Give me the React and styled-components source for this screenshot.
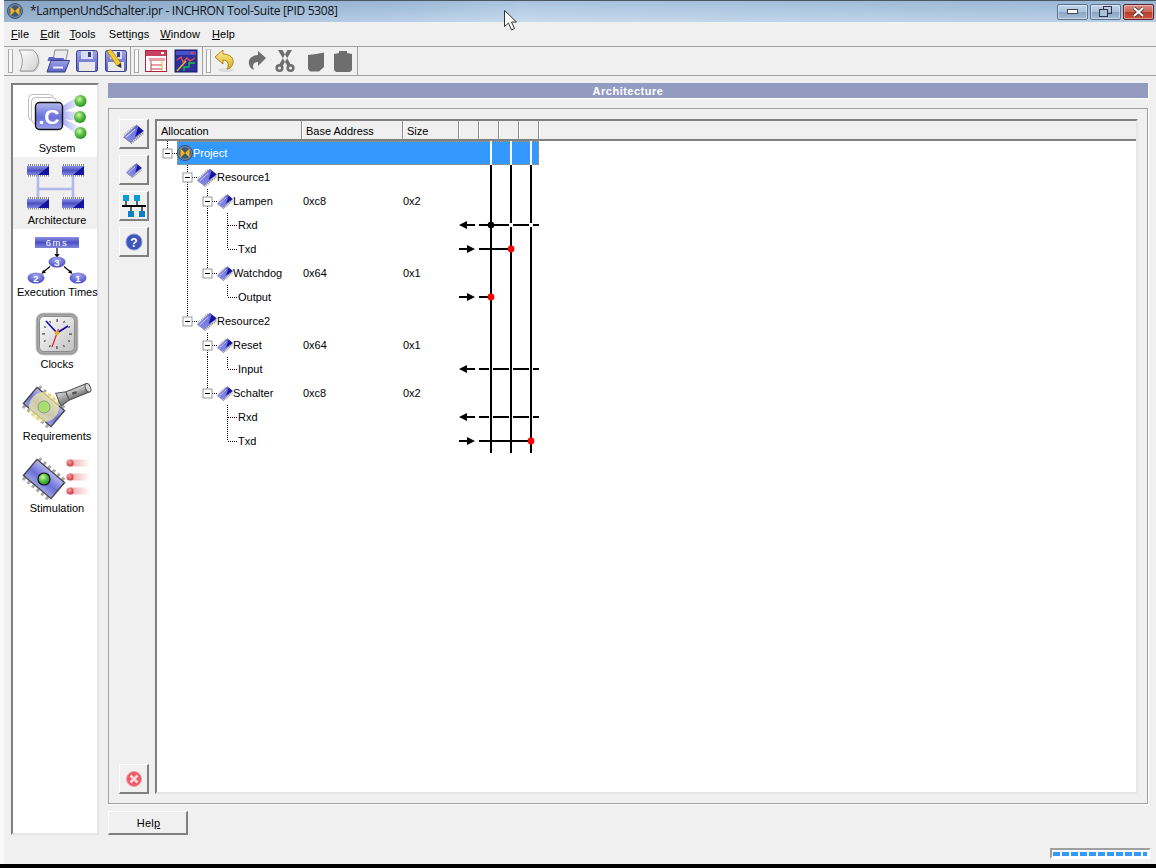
import React from "react";
import styled, { createGlobalStyle } from "styled-components";

const Global = createGlobalStyle`
  html, body { margin: 0; padding: 0; background: #f9f9f9; }
  #root { width: 1156px; height: 868px; overflow: hidden; }
  * { box-sizing: border-box; }
`;

const Page = styled.div`
  position: relative;
  width: 1156px;
  height: 868px;
  display: flex;
  flex-direction: column;
  background: #f9f9f9;
  font: 11px "Liberation Sans", Arial, sans-serif;
  color: #000;
`;
const Window = styled.div`
  flex: 1;
  margin-left: 4px;
  display: flex;
  flex-direction: column;
  background: #f0f0f0;
  min-height: 0;
`;
const BlackEdge = styled.div`
  height: 4px;
  background: #000;
`;
const TitleBar = styled.div`
  height: 22px;
  display: flex;
  align-items: center;
  padding: 0 2px 0 2px;
  border-top: 1px solid #4b5663;
  background:
    linear-gradient(90deg, rgba(70, 100, 140, 0.28) 0, rgba(70, 100, 140, 0.05) 35%, rgba(255, 255, 255, 0.12) 45%, rgba(70, 100, 140, 0.08) 100%),
    linear-gradient(180deg, #9fbcd9 0, #c0d6ec 100%);
`;
const TitleIcon = styled.svg`
  width: 16px;
  height: 16px;
  margin-right: 8px;
  flex: none;
  position: relative;
  top: -1px;
  left: 1px;
`;
const TitleText = styled.div`
  flex: 1;
  font: 12px "Open Sans", "Liberation Sans", sans-serif;
  letter-spacing: -0.3px;
  color: #111;
  position: relative;
  top: -1px;
  white-space: nowrap;
`;
const CaptionButton = styled.div`
  width: 31px;
  height: 16px;
  margin-left: 2px;
  border: 1px solid ${(p) => (p.$close ? "#5b1f2f" : "#5d728c")};
  border-radius: 2px;
  display: flex;
  align-items: center;
  justify-content: center;
  box-shadow: inset 0 0 0 1px rgba(255, 255, 255, 0.4);
  background: ${(p) =>
    p.$close
      ? "linear-gradient(180deg,#dc8d80 0,#cd6555 48%,#b83c2a 52%,#c9573f 100%)"
      : "linear-gradient(180deg,#c2d6ea 0,#a7c0da 48%,#8aa6c4 52%,#a4bdd7 100%)"};
`;
const MenuBar = styled.div`
  height: 25px;
  display: flex;
  align-items: center;
  padding-left: 7px;
  border-bottom: 1px solid #a0a0a0;
`;
const MenuItem = styled.span`
  margin-right: ${(p) => p.$gap}px;
  letter-spacing: 0.1px;
  u { text-underline-offset: 1px; }
`;
const ToolBar = styled.div`
  height: 29px;
  display: flex;
  border-bottom: 1px solid #a0a0a0;
`;
const ToolGroup = styled.div`
  display: flex;
  align-items: center;
  padding-left: ${(p) => p.$pad}px;
  padding-right: ${(p) => p.$right || 0}px;
  border-right: 1px solid #a0a0a0;
`;
const Grip = styled.div`
  width: 5px;
  height: 24px;
  margin-right: ${(p) => p.$gap}px;
  border: 1px solid #a8a8a8;
  border-top-color: #ccc;
  background: #fafafa;
`;
const ToolCell = styled.div`
  width: ${(p) => p.$w}px;
  flex: none;
  height: 28px;
  display: flex;
  align-items: center;
  justify-content: center;
  svg { flex: none; }
`;
const Body = styled.div`
  height: 759px;
  padding: 7px 8px 0 7px;
  display: flex;
  gap: 9px;
`;
const Sidebar = styled.nav`
  width: 88px;
  height: 752px;
  flex: none;
  background: #fff;
  border-style: solid;
  border-width: 2px;
  border-color: #808080 #e6e6e6 #e6e6e6 #808080;
`;
const NavItem = styled.div`
  height: 72px;
  background: ${(p) => (p.$active ? "#f0f0f0" : "#fff")};
`;
const NavIcon = styled.svg`
  display: block;
  width: 84px;
  height: 56px;
`;
const NavLabel = styled.div`
  height: 14px;
  line-height: 14px;
  padding-left: 4px;
  text-align: center;
  white-space: nowrap;
`;
const Main = styled.main`
  flex: 1;
  display: flex;
  flex-direction: column;
  min-width: 0;
`;
const SectionHeader = styled.div`
  height: 15px;
  line-height: 16px;
  background: #939bc1;
  color: #fff;
  font-weight: bold;
  letter-spacing: 0.5px;
  text-align: center;
  box-shadow: 1px 1px 0 #fff;
`;
const GroupBox = styled.section`
  height: 696px;
  margin-top: 10px;
  padding: 10px 9px 9px 10px;
  display: flex;
  gap: 6px;
  border: 1px solid #a0a0a0;
  box-shadow: 1px 1px 0 #fff;
`;
const SideTools = styled.div`
  width: 30px;
  flex: none;
  display: flex;
  flex-direction: column;
  gap: 6px;
`;
const SideButton = styled.button`
  width: 30px;
  height: 30px;
  padding: 0;
  display: flex;
  align-items: center;
  justify-content: center;
  background: #f0f0f0;
  border-style: solid;
  border-width: 1px 2px 2px 1px;
  border-color: #fff #808080 #808080 #fff;
  margin-top: ${(p) => (p.$bottom ? "auto" : "0")};
`;
const TreeFrame = styled.div`
  flex: 1;
  min-width: 0;
  background: #fff;
  border-style: solid;
  border-width: 2px;
  border-color: #808080 #e6e6e6 #e6e6e6 #808080;
`;
const HeaderRow = styled.div`
  height: 20px;
  display: flex;
  background: #f0f0f0;
  border-bottom: 2px solid #808080;
`;
const HeaderCell = styled.div`
  width: ${(p) => p.$w}px;
  flex: ${(p) => (p.$fill ? 1 : "none")};
  line-height: 20px;
  padding-left: 4px;
  box-shadow: inset 1px 0 0 #fff;
  border-right: ${(p) => (p.$fill ? "0" : "1px solid #8c8c8c")};
`;
const Row = styled.div`
  position: relative;
  height: 24px;
  display: grid;
  grid-template-columns: 145px 100px 57px 80px;
  align-items: center;
`;
const Selection = styled.div`
  position: absolute;
  left: 20px;
  top: 0;
  width: 362px;
  height: 24px;
  background: #3399ff;
  outline: 1px dotted #d0904a;
  outline-offset: -1px;
`;
const TreeGuide = styled.svg`
  position: absolute;
  left: 0;
  top: 0;
  width: 145px;
  height: 24px;
`;
const TreeCell = styled.div`
  position: relative;
  height: 24px;
  display: flex;
  align-items: center;
  padding-left: ${(p) => p.$indent}px;
  color: ${(p) => (p.$selected ? "#fff" : "#000")};
  white-space: nowrap;
`;
const TreeIconSlot = styled.span`
  position: relative;
  display: block;
  flex: none;
  height: ${(p) => p.$size}px;
  width: ${(p) => p.$size}px;
`;
const TreeLabel = styled.span`
  position: relative;
`;
const ValueCell = styled.div`
  position: relative;
  padding-left: 1px;
`;
const Matrix = styled.svg`
  position: relative;
  display: block;
  width: 80px;
  height: 24px;
`;
const HelpButton = styled.button`
  width: 80px;
  height: 24px;
  margin-top: 7px;
  padding: 0 0 0 2px;
  background: #f0f0f0;
  border-style: solid;
  border-width: 1px 2px 2px 1px;
  border-color: #fff #808080 #808080 #fff;
  font: inherit;
  letter-spacing: 0.2px;
  color: #000;
`;
const Footer = styled.div`
  flex: 1;
  display: flex;
  justify-content: flex-end;
  align-items: flex-start;
  padding: 13px 5px 0 0;
`;
const Progress = styled.div`
  width: 101px;
  height: 11px;
  display: flex;
  gap: 2px;
  align-items: center;
  padding-left: 1px;
  background: #fbfbfb;
  border-style: solid;
  border-width: 2px;
  border-color: #a0a0a0 #fff #fff #a0a0a0;
`;
const Segment = styled.div`
  width: ${(p) => p.$w}px;
  height: 4px;
  background: #3399ff;
`;
const Cursor = styled.svg`
  position: absolute;
  left: 504px;
  top: 10px;
  width: 14px;
  height: 21px;
`;

const Defs = () => (
  <svg width="0" height="0" style={{ position: "absolute" }}>
    <defs>
      <linearGradient id="chip" x1="0" y1="1" x2="1" y2="0">
        <stop offset="0" stopColor="#8f94e6" />
        <stop offset="0.7" stopColor="#6a70d8" />
        <stop offset="1" stopColor="#4a50c4" />
      </linearGradient>
      <linearGradient id="front" x1="0" y1="0" x2="0" y2="1">
        <stop offset="0" stopColor="#b4b8ef" />
        <stop offset="0.55" stopColor="#6a70d8" />
        <stop offset="1" stopColor="#9ca1e6" />
      </linearGradient>
      <radialGradient id="ball" cx="0.4" cy="0.35" r="0.7">
        <stop offset="0" stopColor="#d2f6b0" />
        <stop offset="0.5" stopColor="#58c040" />
        <stop offset="1" stopColor="#1f8f2a" />
      </radialGradient>
      <radialGradient id="redBall" cx="0.4" cy="0.35" r="0.7">
        <stop offset="0" stopColor="#f6a0a0" />
        <stop offset="1" stopColor="#c8343c" />
      </radialGradient>
      <linearGradient id="trail" x1="0" y1="0" x2="1" y2="0">
        <stop offset="0" stopColor="#f0a8a8" />
        <stop offset="1" stopColor="#fff" />
      </linearGradient>
      <linearGradient id="beam" x1="0" y1="0" x2="1" y2="0">
        <stop offset="0" stopColor="#a9adf0" />
        <stop offset="1" stopColor="#eef0ff" />
      </linearGradient>
      <linearGradient id="bar" x1="0" y1="0" x2="0" y2="1">
        <stop offset="0" stopColor="#8d92e4" />
        <stop offset="0.5" stopColor="#4a50c4" />
        <stop offset="1" stopColor="#8388dc" />
      </linearGradient>
      <radialGradient id="oval" cx="0.5" cy="0.3" r="0.8">
        <stop offset="0" stopColor="#a4a8f0" />
        <stop offset="1" stopColor="#3b41bd" />
      </radialGradient>
      <linearGradient id="clockFace" x1="0" y1="0" x2="1" y2="1">
        <stop offset="0" stopColor="#ffffff" />
        <stop offset="1" stopColor="#c0c0c0" />
      </linearGradient>
      <linearGradient id="disk" x1="0" y1="0" x2="0" y2="1">
        <stop offset="0" stopColor="#9fa4e8" />
        <stop offset="1" stopColor="#5a60c0" />
      </linearGradient>
      <linearGradient id="sheet" x1="0" y1="0" x2="1" y2="1">
        <stop offset="0" stopColor="#fff" />
        <stop offset="1" stopColor="#d0d0d0" />
      </linearGradient>
      <linearGradient id="gold" x1="0" y1="0" x2="0" y2="1">
        <stop offset="0" stopColor="#fff09a" />
        <stop offset="1" stopColor="#d9a820" />
      </linearGradient>
      <linearGradient id="torch" x1="0" y1="0" x2="0" y2="1">
        <stop offset="0" stopColor="#d8d8d8" />
        <stop offset="1" stopColor="#707070" />
      </linearGradient>
    </defs>
  </svg>
);

const ProjectLogo = () => (
  <>
    <circle cx="8" cy="8" r="7.5" fill="#6d86a8" stroke="#3e4e68" />
    <circle cx="8" cy="8" r="5.8" fill="#41587a" />
    <path d="M3.5 3.5v9L8 8zM12.5 3.5v9L8 8z" fill="#f7b518" />
  </>
);

const ChipGlyph = ({ size }) => (
  <svg width={size} height={size} viewBox="0 0 20 20" style={{ display: "block" }}>
    <path d="M7.5 19.5L20 9" stroke="#909090" strokeWidth="2" strokeDasharray="1.2 0.8" />
    <path d="M1 11.5L11 2.5" stroke="#a8a8a8" strokeWidth="1.4" strokeDasharray="1 1" />
    <path d="M0.5 13.5L13 2 19.5 7.5 7 18.5z" fill="url(#chip)" stroke="#585d9c" strokeWidth="0.5" />
    <path d="M11.5 13L14.6 3.4 19.5 7.5z" fill="#1414a0" />
    <path d="M3 13.5L11.5 6" stroke="#d0d2f8" strokeWidth="1" />
  </svg>
);

const Dots = ({ d }) => <path d={d} stroke="#000" strokeWidth="1" strokeDasharray="1 1" fill="none" />;

const Guide = ({ depth, next, through }) => {
  const x = 10 + 20 * depth;
  return (
    <TreeGuide viewBox="0 0 145 24">
      {through.map((t) => (
        <Dots key={t} d={`M${t + 0.5} 0V24`} />
      ))}
      {depth === 3 ? (
        <>
          <Dots d={`M${x + 0.5} 0V${next ? 24 : 12}`} />
          <Dots d={`M${x + 1} 12.5H${x + 10}`} />
        </>
      ) : (
        <>
          <Dots d={`M${x + 0.5} 0V7`} />
          {next && <Dots d={`M${x + 0.5} 17V24`} />}
          <Dots d={`M${x + 5} 12.5H${x + 10}`} />
          <rect x={x - 4} y={8} width={9} height={9} fill="#fff" stroke="#999" />
          <path d={`M${x - 2} 12.5H${x + 3}`} stroke="#000" />
        </>
      )}
    </TreeGuide>
  );
};

const BusMatrix = ({ dir, hit, selected }) => {
  const verticals = [32, 52, 72];
  if (selected) {
    return (
      <Matrix viewBox="0 0 80 24">
        {verticals.map((x) => (
          <rect key={x} x={x - 1} y={0} width={2} height={24} fill="#fff" />
        ))}
      </Matrix>
    );
  }
  return (
    <Matrix viewBox="0 0 80 24">
      {verticals.map((x) => (
        <rect key={x} x={x - 1} y={0} width={2} height={24} fill="#000" />
      ))}
      {dir === "in" && <path d="M0 12l8-4v3h8v2H8v3z" fill="#000" />}
      {dir === "out" && <path d="M16 12l-8-4v3H0v2h8v3z" fill="#000" />}
      {dir === "in" && (
        <>
          <rect x={20} y={11} width={hit === 0 ? 12 : 10} height={2} />
          <rect x={34} y={11} width={16} height={2} />
          <rect x={54} y={11} width={16} height={2} />
          <rect x={74} y={11} width={6} height={2} />
          {hit === 0 && (
            <>
              <rect x={50} y={10} width={4} height={4} fill="#fff" />
              <rect x={70} y={10} width={4} height={4} fill="#fff" />
              <circle cx={32} cy={12} r={3.3} fill="#000" />
            </>
          )}
        </>
      )}
      {dir === "out" && (
        <>
          <rect x={20} y={11} width={verticals[hit] - 20} height={2} />
          <circle cx={verticals[hit]} cy={12} r={3.4} fill="#ff0000" />
        </>
      )}
    </Matrix>
  );
};

const ROWS = [
  { label: "Project", depth: 0, next: false, through: [], selected: true },
  { label: "Resource1", depth: 1, next: true, through: [] },
  { label: "Lampen", depth: 2, next: true, through: [30], base: "0xc8", size: "0x2" },
  { label: "Rxd", depth: 3, next: true, through: [30, 50], dir: "in", hit: 0 },
  { label: "Txd", depth: 3, next: false, through: [30, 50], dir: "out", hit: 1 },
  { label: "Watchdog", depth: 2, next: false, through: [30], base: "0x64", size: "0x1" },
  { label: "Output", depth: 3, next: false, through: [30], dir: "out", hit: 0 },
  { label: "Resource2", depth: 1, next: false, through: [] },
  { label: "Reset", depth: 2, next: true, through: [], base: "0x64", size: "0x1" },
  { label: "Input", depth: 3, next: false, through: [50], dir: "in" },
  { label: "Schalter", depth: 2, next: false, through: [], base: "0xc8", size: "0x2" },
  { label: "Rxd", depth: 3, next: true, through: [], dir: "in" },
  { label: "Txd", depth: 3, next: false, through: [], dir: "out", hit: 2 },
];
const INDENT = [20, 40, 60, 81];

const TreeRow = ({ row }) => (
  <Row>
    {row.selected && <Selection />}
    <TreeCell $indent={INDENT[row.depth]} $selected={row.selected}>
      <Guide depth={row.depth} next={row.next} through={row.through} />
      {row.depth === 0 && (
        <TreeIconSlot $size={16}>
          <svg width="16" height="16" viewBox="0 0 16 16" style={{ display: "block" }}>
            <ProjectLogo />
          </svg>
        </TreeIconSlot>
      )}
      {row.depth === 1 && <TreeIconSlot $size={20}><ChipGlyph size={20} /></TreeIconSlot>}
      {row.depth === 2 && <TreeIconSlot $size={16}><ChipGlyph size={16} /></TreeIconSlot>}
      <TreeLabel>{row.label}</TreeLabel>
    </TreeCell>
    <ValueCell>{row.base}</ValueCell>
    <ValueCell>{row.size}</ValueCell>
    <BusMatrix dir={row.dir} hit={row.hit} selected={row.selected} />
  </Row>
);

const SysIcon = () => (
  <NavIcon viewBox="0 0 84 56">
    <rect x="15.5" y="9.5" width="25" height="26" rx="4" fill="#fff" stroke="#bdbdbd" />
    <rect x="18.5" y="12.5" width="25" height="26" rx="4" fill="#fff" stroke="#bdbdbd" />
    <path d="M48 22L64 12 66 20 48 28z" fill="url(#beam)" />
    <path d="M48 26L66 27 66 36 48 34z" fill="url(#beam)" />
    <path d="M48 32L66 42 62 48 48 38z" fill="url(#beam)" />
    <rect x="22.5" y="17.5" width="27" height="27" rx="4" fill="url(#front)" stroke="#111" strokeWidth="1.4" />
    <text x="36" y="39" textAnchor="middle" fontFamily="Liberation Sans" fontWeight="bold" fontSize="21" fill="#fff">.C</text>
    <circle cx="67.5" cy="16" r="6" fill="url(#ball)" />
    <circle cx="67" cy="32" r="6" fill="url(#ball)" />
    <circle cx="67.5" cy="48" r="6" fill="url(#ball)" />
  </NavIcon>
);

const MiniChip = ({ x, y }) => (
  <g>
    <path d={`M${x + 1} ${y + 1}H${x + 22}M${x + 1} ${y + 11.5}H${x + 22}`} stroke="#8a8a8a" strokeWidth="2" strokeDasharray="1 1" />
    <rect x={x} y={y + 2} width="22" height="9" fill="url(#bar)" />
    <path d={`M${x + 11} ${y + 11}L${x + 22} ${y + 2}V${y + 11}z`} fill="#1414a0" />
  </g>
);

const ArchIcon = () => (
  <NavIcon viewBox="0 0 84 56">
    <path d="M25 16V44M60 16V44M25 32H60" stroke="#b4b7ea" strokeWidth="2.6" fill="none" />
    <MiniChip x={14} y={7} />
    <MiniChip x={49} y={7} />
    <MiniChip x={14} y={40} />
    <MiniChip x={49} y={40} />
  </NavIcon>
);

const ExecIcon = () => (
  <NavIcon viewBox="0 0 84 56">
    <rect x="22" y="8" width="44" height="11" fill="url(#bar)" />
    <text x="44" y="17" textAnchor="middle" fontFamily="Liberation Sans" fontSize="9.5" letterSpacing="1.5" fill="#fff">6ms</text>
    <path d="M44 19V27" stroke="#000" strokeWidth="1.2" />
    <path d="M41.5 25L44 29 46.5 25z" />
    <path d="M37 37.5L31 42.5M51 37.5L57 42.5" stroke="#000" strokeWidth="1.2" />
    <path d="M28.5 45L30 41 33 43.5zM59.5 45L58 41 55 43.5z" />
    <ellipse cx="44" cy="33" rx="8.5" ry="5.5" fill="url(#oval)" />
    <ellipse cx="23" cy="49" rx="8.5" ry="5.5" fill="url(#oval)" />
    <ellipse cx="65" cy="49" rx="8.5" ry="5.5" fill="url(#oval)" />
    <g fontFamily="Liberation Sans" fontSize="9.5" fontWeight="bold" fill="#fff" textAnchor="middle">
      <text x="44" y="36.5">3</text>
      <text x="23" y="52.5">2</text>
      <text x="65" y="52.5">1</text>
    </g>
  </NavIcon>
);

const ClockIcon = () => {
  const ticks = Array.from({ length: 12 }, (_, i) => i * 30);
  return (
    <NavIcon viewBox="0 0 84 56">
      <rect x="22.5" y="11.5" width="43" height="43" rx="8" fill="#d8d8d8" />
      <rect x="24" y="13" width="40" height="40" rx="6" fill="#a8a8a8" stroke="#888" />
      <rect x="26.5" y="15.5" width="35" height="35" rx="4" fill="url(#clockFace)" stroke="#8a8a8a" />
      {ticks.map((a) => (
        <rect key={a} x="43.5" y="18" width="1.2" height={a % 90 === 0 ? 3 : 2} fill="#444" transform={`rotate(${a} 44 33)`} />
      ))}
      <path d="M44 32L33 20M44 32L55 25" stroke="#0c0ca8" strokeWidth="1.6" fill="none" />
      <path d="M39 46L45.5 28" stroke="#e01818" strokeWidth="1.1" fill="none" />
      <circle cx="44" cy="32" r="2.2" fill="#e8b020" />
    </NavIcon>
  );
};

const TiltChip = ({ cx, cy }) => (
  <g transform={`translate(${cx} ${cy}) rotate(40)`}>
    <path d="M-17 -12.5H17M-17 12.5H17" stroke="#a8a8a8" strokeWidth="3.4" strokeDasharray="3 3" />
    <rect x="-18" y="-10.5" width="36" height="21" fill="url(#front)" stroke="#444" strokeWidth="1.4" />
  </g>
);

const ReqIcon = () => (
  <NavIcon viewBox="0 0 84 56">
    <TiltChip cx={31} cy={34} />
    <circle cx="31" cy="34" r="15" fill="#f6ee9c" opacity="0.7" />
    <circle cx="31" cy="34" r="6" fill="#a8df6e" stroke="#8aa070" />
    <g transform="translate(62 20) rotate(-22)">
      <path d="M-18 -7L-8 -4.5V4.5L-18 7z" fill="url(#torch)" stroke="#555" />
      <rect x="-8" y="-4.5" width="22" height="9" rx="1" fill="url(#torch)" stroke="#555" />
      <ellipse cx="14" cy="0" rx="2.5" ry="4.5" fill="#d8d8d8" stroke="#555" />
      <rect x="-3" y="-1.5" width="5" height="2.5" rx="1" fill="#555" />
    </g>
  </NavIcon>
);

const StimIcon = () => (
  <NavIcon viewBox="0 0 84 56">
    <TiltChip cx={31} cy={34} />
    <circle cx="31" cy="34" r="6" fill="url(#ball)" stroke="#111" strokeWidth="1.2" />
    {[18, 32, 46].map((y) => (
      <g key={y}>
        <rect x="57" y={y - 3.5} width="20" height="7" fill="url(#trail)" />
        <circle cx="57" cy={y} r="3.6" fill="url(#redBall)" />
      </g>
    ))}
  </NavIcon>
);

const NAV = [
  { label: "System", Icon: SysIcon },
  { label: "Architecture", Icon: ArchIcon, active: true },
  { label: "Execution Times", Icon: ExecIcon },
  { label: "Clocks", Icon: ClockIcon },
  { label: "Requirements", Icon: ReqIcon },
  { label: "Stimulation", Icon: StimIcon },
];

const Tb = ({ children }) => (
  <svg width="24" height="24" viewBox="0 0 24 24">{children}</svg>
);

const NewIcon = () => (
  <Tb>
    <path d="M3 2.5H17C20 4 22.5 8 22.5 12.5 22.5 17 20 21 17 23H4C3 23 3 23 3.5 22 7 17 7 8 3 2.5z" fill="#c8c8c8" />
    <path d="M2 1H16C19 3 21.5 7 21.5 11.5 21.5 16 19 20 16 22H3C6 16 6.5 7 2 1z" fill="url(#sheet)" stroke="#9a9a9a" />
  </Tb>
);
const OpenIcon = () => (
  <Tb>
    <path d="M9 1H22L20 11H7z" fill="#ececec" stroke="#8a8a8a" />
    <path d="M2 10L3 8H8L9 9H18L17.5 12H1.5z" fill="#5a60c0" />
    <path d="M5 11.5H23.5L19 23H1z" fill="url(#disk)" stroke="#3a3f86" />
    <path d="M7 18.5H17" stroke="#eef" strokeWidth="2" />
  </Tb>
);
const SaveIcon = ({ pencil }) => (
  <Tb>
    <rect x="1.5" y="1.5" width="21" height="21" rx="2" fill="url(#disk)" stroke="#3a3f86" />
    <rect x="6" y="2" width="12" height="8" fill="#d9dcf5" />
    <rect x="13" y="3" width="3" height="5" fill="#3a3f86" />
    <rect x="4" y="13" width="16" height="9" fill="#e8e8e8" />
    {pencil && (
      <>
        <path d="M3 2L7 0.5 17 14 13 17z" fill="#f2c92e" stroke="#8a6a10" strokeWidth="0.6" />
        <path d="M13 17L17 14 17.5 19z" fill="#333" />
      </>
    )}
  </Tb>
);
const PlanIcon = () => (
  <Tb>
    <rect x="1.5" y="1.5" width="21" height="21" fill="#fff" stroke="#b02040" />
    <rect x="2" y="2" width="20" height="5" fill="#c84060" />
    <rect x="17" y="3" width="3" height="2" fill="#fff" />
    <rect x="5" y="9" width="16" height="3" fill="#e89aa8" />
    <path d="M7 12V22M7 16H18M7 20H18" stroke="#c84050" fill="none" />
    <path d="M18 12V22" stroke="#e8b820" />
  </Tb>
);
const ChartIcon = () => (
  <Tb>
    <rect x="1" y="1" width="22" height="22" fill="#2a2f9a" stroke="#1a1f6a" />
    <rect x="2" y="2" width="20" height="4" fill="#4a50c8" />
    <rect x="17" y="3" width="3" height="2" fill="#e04040" />
    <path d="M3 11L7 8 9 13 13 9 16 12 21 9" stroke="#e05050" fill="none" strokeWidth="1.4" />
    <path d="M3 22L12 12" stroke="#e8c020" strokeWidth="1.4" />
    <path d="M10 22V18H15V14H21" stroke="#20c040" fill="none" strokeWidth="1.4" />
  </Tb>
);
const UndoIcon = () => (
  <Tb>
    <ellipse cx="13" cy="21" rx="8" ry="2" fill="#ddd" />
    <path d="M2 8L10 1V5C17 5 21 9 20 14 19.5 17 17 20 14 20 16 17 16 11 10 11V15z" fill="url(#gold)" stroke="#b08a10" />
  </Tb>
);
const RedoIcon = () => (
  <Tb>
    <path d="M21 9L13 2V6C7 6 3 10 4 15 4.5 18 6 20 9 21 7 17 8 13 13 13V17z" fill="#6e6e6e" />
  </Tb>
);
const CutIcon = () => (
  <Tb>
    <path d="M5 1L9.5 1 18 16 15 18zM19 1L14.5 1 6 16 9 18z" fill="#6e6e6e" />
    <circle cx="6.5" cy="19" r="2.8" fill="none" stroke="#6e6e6e" strokeWidth="2.6" />
    <circle cx="17.5" cy="19" r="2.8" fill="none" stroke="#6e6e6e" strokeWidth="2.6" />
  </Tb>
);
const CopyIcon = () => (
  <Tb>
    <path d="M4 6L12 5 20 3.5V18L15 22.5H6L4 20z" fill="#6e6e6e" />
  </Tb>
);
const PasteIcon = () => (
  <Tb>
    <path d="M3 5L8 4V2H16V4L21 5V21L19 23H5L3 21z" fill="#6e6e6e" />
  </Tb>
);

const HEADERS = [
  { t: "Allocation", w: 145 },
  { t: "Base Address", w: 101 },
  { t: "Size", w: 56 },
  { t: "", w: 20 },
  { t: "", w: 20 },
  { t: "", w: 20 },
  { t: "", w: 20 },
];

export default function App() {
  return (
    <Page>
      <Global />
      <Defs />
      <Window>
        <TitleBar>
          <TitleIcon viewBox="0 0 16 16"><ProjectLogo /></TitleIcon>
          <TitleText>*LampenUndSchalter.ipr - INCHRON Tool-Suite [PID 5308]</TitleText>
          <CaptionButton>
            <svg width="11" height="6"><rect x="0.5" y="0.5" width="10" height="4" fill="#fff" stroke="#445" /></svg>
          </CaptionButton>
          <CaptionButton>
            <svg width="13" height="11"><rect x="4.5" y="0.5" width="8" height="7" fill="none" stroke="#334" /><rect x="0.5" y="3.5" width="8" height="7" fill="#a8c0da" stroke="#334" /></svg>
          </CaptionButton>
          <CaptionButton $close>
            <svg width="13" height="10"><path d="M2 1L11 9M11 1L2 9" stroke="#334" strokeWidth="3.4" /><path d="M2 1L11 9M11 1L2 9" stroke="#fff" strokeWidth="2" /></svg>
          </CaptionButton>
        </TitleBar>
        <MenuBar>
          <MenuItem $gap={11}><u>F</u>ile</MenuItem>
          <MenuItem $gap={10}><u>E</u>dit</MenuItem>
          <MenuItem $gap={13}><u>T</u>ools</MenuItem>
          <MenuItem $gap={11}>Sett<u>i</u>ngs</MenuItem>
          <MenuItem $gap={12}><u>W</u>indow</MenuItem>
          <MenuItem $gap={0}><u>H</u>elp</MenuItem>
        </MenuBar>
        <ToolBar>
          <ToolGroup $pad={4}>
            <Grip $gap={1} />
            <ToolCell $w={29}><NewIcon /></ToolCell>
            <ToolCell $w={29}><OpenIcon /></ToolCell>
            <ToolCell $w={29}><SaveIcon /></ToolCell>
            <ToolCell $w={29}><SaveIcon pencil /></ToolCell>
          </ToolGroup>
          <ToolGroup $pad={3} $right={1}>
            <Grip $gap={2} />
            <ToolCell $w={30}><PlanIcon /></ToolCell>
            <ToolCell $w={30}><ChartIcon /></ToolCell>
          </ToolGroup>
          <ToolGroup $pad={3} $right={8}>
            <Grip $gap={0} />
            <ToolCell $w={28}><UndoIcon /></ToolCell>
            <ToolCell $w={36}><RedoIcon /></ToolCell>
            <ToolCell $w={20}><CutIcon /></ToolCell>
            <ToolCell $w={42}><CopyIcon /></ToolCell>
            <ToolCell $w={12}><PasteIcon /></ToolCell>
          </ToolGroup>
        </ToolBar>
        <Body>
          <Sidebar>
            {NAV.map(({ label, Icon, active }) => (
              <NavItem key={label} $active={active}>
                <Icon />
                <NavLabel>{label}</NavLabel>
              </NavItem>
            ))}
          </Sidebar>
          <Main>
            <SectionHeader>Architecture</SectionHeader>
            <GroupBox>
              <SideTools>
                <SideButton><ChipGlyph size={21} /></SideButton>
                <SideButton><ChipGlyph size={16} /></SideButton>
                <SideButton>
                  <svg width="24" height="24" viewBox="0 0 24 24">
                    <path d="M4 7V12M15 7V12M9 13V17M20 13V17" stroke="#000" strokeWidth="1.2" fill="none" />
                    <path d="M0 12H24" stroke="#000" strokeWidth="2" />
                    <rect x="1" y="1" width="6" height="6" fill="#0a9ad8" />
                    <rect x="12" y="1" width="6" height="6" fill="#0a9ad8" />
                    <rect x="6" y="17" width="6" height="6" fill="#0a80c8" />
                    <rect x="17" y="17" width="6" height="6" fill="#0a80c8" />
                  </svg>
                </SideButton>
                <SideButton>
                  <svg width="18" height="18" viewBox="0 0 18 18">
                    <circle cx="9" cy="9" r="8" fill="#3d54b8" stroke="#8a9ae0" />
                    <text x="9" y="13.5" textAnchor="middle" fontFamily="Liberation Sans" fontWeight="bold" fontSize="12" fill="#fff">?</text>
                  </svg>
                </SideButton>
                <SideButton $bottom>
                  <svg width="18" height="18" viewBox="0 0 18 18">
                    <circle cx="9" cy="9" r="7.5" fill="#ee5a68" stroke="#f4a0a8" />
                    <path d="M5.5 5.5L12.5 12.5M12.5 5.5L5.5 12.5" stroke="#fbd8d8" strokeWidth="2.6" />
                  </svg>
                </SideButton>
              </SideTools>
              <TreeFrame>
                <HeaderRow>
                  {HEADERS.map((h, i) => (
                    <HeaderCell key={i} $w={h.w}>{h.t}</HeaderCell>
                  ))}
                  <HeaderCell $fill />
                </HeaderRow>
                {ROWS.map((r, i) => (
                  <TreeRow key={i} row={r} />
                ))}
              </TreeFrame>
            </GroupBox>
            <HelpButton>Hel<u>p</u></HelpButton>
          </Main>
        </Body>
        <Footer>
          <Progress>
            {[7, 7, 7, 7, 7, 7, 7, 7, 7, 7, 4].map((w, i) => (
              <Segment key={i} $w={w} />
            ))}
          </Progress>
        </Footer>
      </Window>
      <BlackEdge />
      <Cursor viewBox="0 0 14 21">
        <path d="M0.5 0.5V16.5L4.5 13 7.5 20 10.5 18.5 7.5 12H12.5z" fill="#fff" stroke="#333" />
      </Cursor>
    </Page>
  );
}
